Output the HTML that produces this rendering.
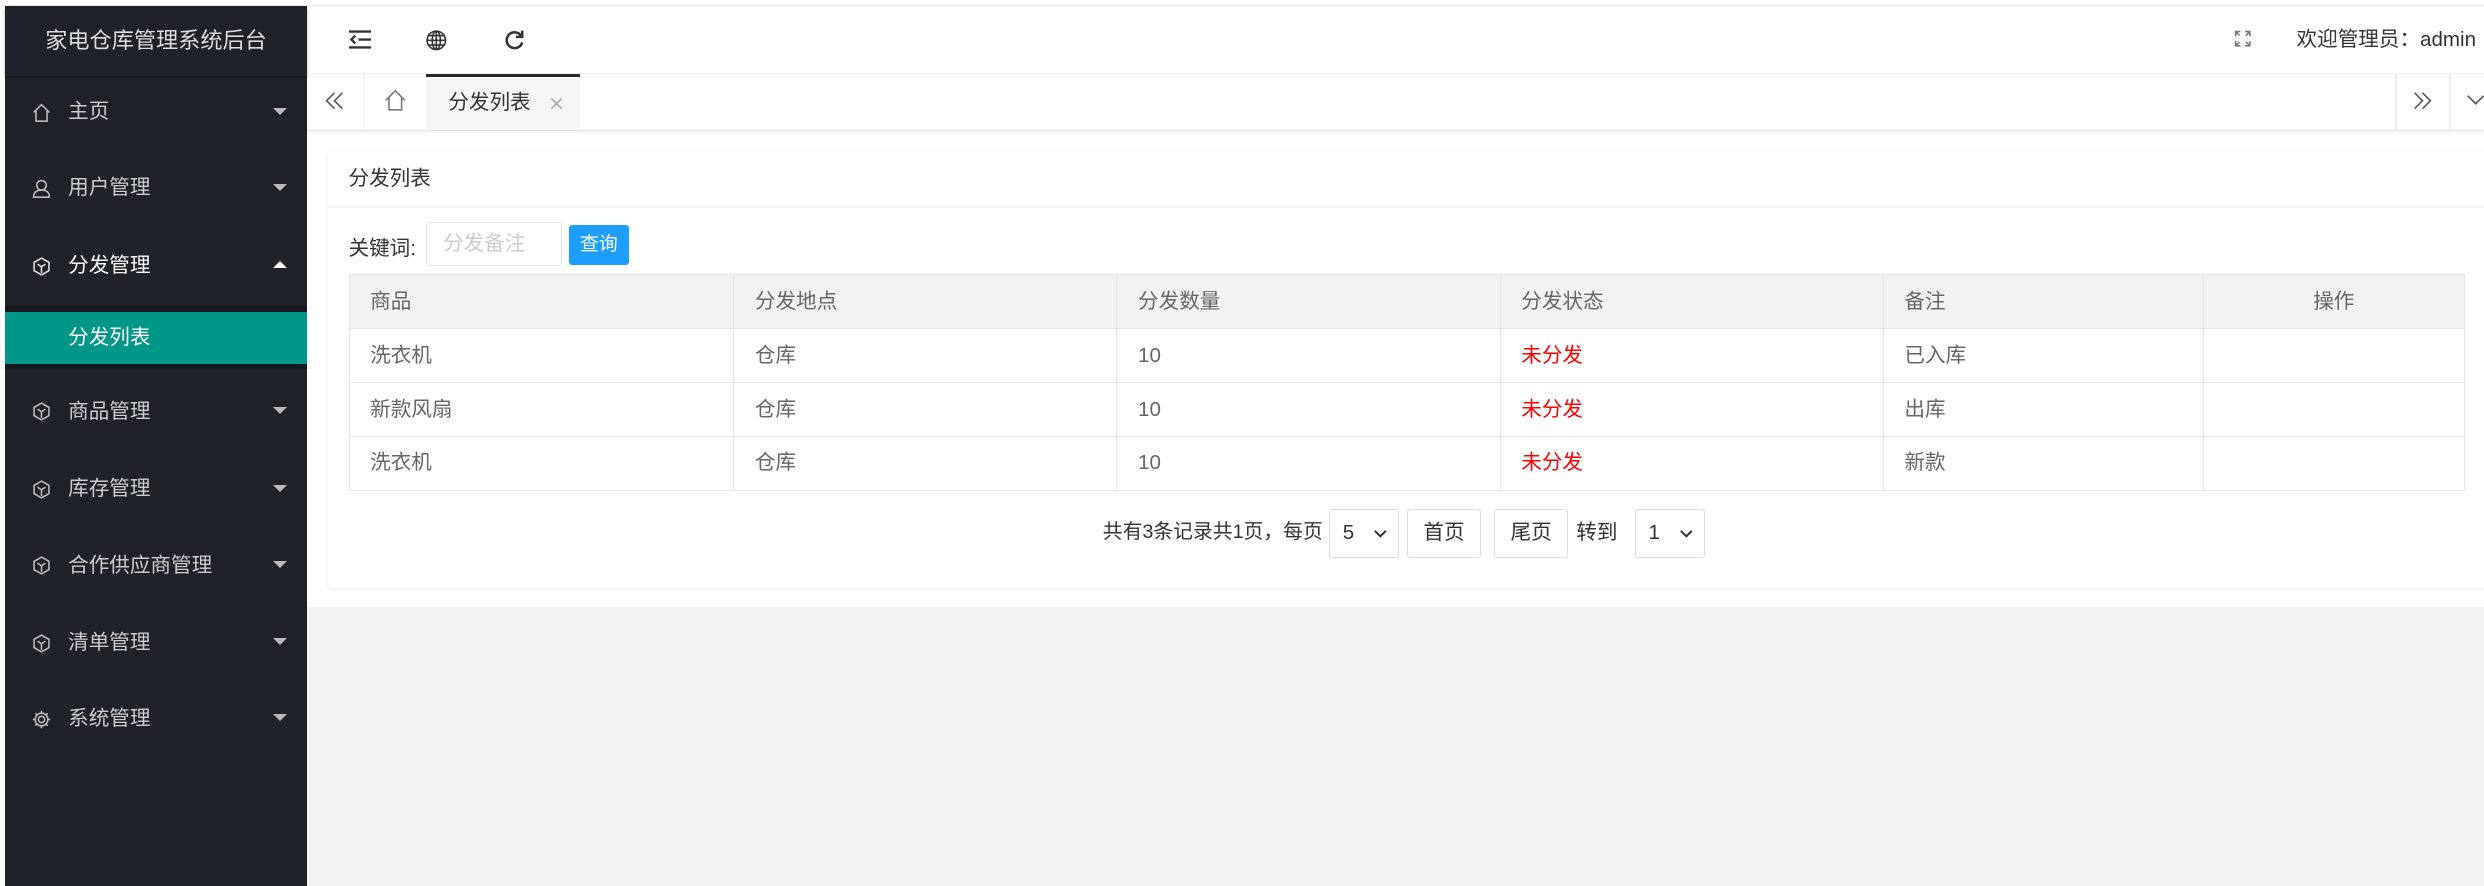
<!DOCTYPE html>
<html><head><meta charset="utf-8"><style>
*{margin:0;padding:0;box-sizing:border-box}
html,body{width:2484px;height:886px;overflow:hidden;background:#fff}
#w{zoom:1.58418;width:1568px;height:559px;position:relative;font-family:"Liberation Sans","Noto Sans CJK SC",sans-serif;font-size:13px;color:#333;line-height:16px}
.a{position:absolute;white-space:nowrap}
#side{left:3px;top:4px;width:191px;height:555px;background:#20222a;color:#ccc}
.mi{position:absolute;left:0;width:191px;height:48px;line-height:48px;padding-left:40px;font-size:13px;color:#ccc}
.mi svg.ic{position:absolute;left:17px;top:18px}
.mi .tri{position:absolute;right:13px;top:21px;width:0;height:0;border-left:5px solid transparent;border-right:5px solid transparent;border-top:5px solid #bbb}
.mi .up{border-top:none;border-bottom:5px solid #fff}
table{border-collapse:collapse;position:absolute;left:220px;top:173px;width:1336px;color:#666}
td,th{border:1px solid #e6e6e6;height:34px;padding:0 0 0 13px;text-align:left;font-weight:normal;vertical-align:middle;line-height:16px}
th{background:#f2f2f2}
.r{color:#f00}
.btn{position:absolute;border:1px solid #ddd;border-radius:2px;height:31px;line-height:29px;text-align:center;background:#fff}
</style></head><body><div id="w">
<div class="a" style="left:0;top:0;width:1568px;height:4px;background:#fff;border-bottom:1px solid #eee"></div>
<div id="side" class="a">
 <div class="a" style="left:0;top:0;width:191px;height:44px;line-height:44px;text-align:center;font-size:14px;color:#ddd;box-shadow:0 1px 2px rgba(0,0,0,.3)">家电仓库管理系统后台</div>
 <div class="mi" style="top:43px"><svg class="ic" width="12" height="12" viewBox="0 0 12 12" fill="none" stroke="#bbb"><path d="M1 6L6 1 11 6M2.5 5v6.5h7V5"/></svg>主页<i class="tri"></i></div>
 <div class="mi" style="top:91px"><svg class="ic" width="12" height="12" viewBox="0 0 12 12" fill="none" stroke="#bbb"><circle cx="6" cy="4" r="3"/><path d="M1 11.5c0-3 2-4.5 5-4.5s5 1.5 5 4.5z"/></svg>用户管理<i class="tri"></i></div>
 <div class="mi" style="top:140px;color:#fff"><svg class="ic" width="12" height="12" viewBox="0 0 12 12" fill="none" stroke="#ddd"><path d="M6 .7l4.7 2.7v5.2L6 11.3 1.3 8.6V3.4zM3.5 4.5L6 6.2l2.5-1.7M6 6.2v4"/></svg>分发管理<i class="tri up"></i></div>
 <div class="a" style="left:0;top:189px;width:191px;height:40px;background:#17181d"></div>
 <div class="a" style="left:0;top:193px;width:191px;height:33px;line-height:33px;background:#009688;color:#fff;padding-left:40px">分发列表</div>
 <div class="mi" style="top:232px"><svg class="ic" width="12" height="12" viewBox="0 0 12 12" fill="none" stroke="#bbb"><path d="M6 .7l4.7 2.7v5.2L6 11.3 1.3 8.6V3.4zM3.5 4.5L6 6.2l2.5-1.7M6 6.2v4"/></svg>商品管理<i class="tri"></i></div>
 <div class="mi" style="top:281px"><svg class="ic" width="12" height="12" viewBox="0 0 12 12" fill="none" stroke="#bbb"><path d="M6 .7l4.7 2.7v5.2L6 11.3 1.3 8.6V3.4zM3.5 4.5L6 6.2l2.5-1.7M6 6.2v4"/></svg>库存管理<i class="tri"></i></div>
 <div class="mi" style="top:329px"><svg class="ic" width="12" height="12" viewBox="0 0 12 12" fill="none" stroke="#bbb"><path d="M6 .7l4.7 2.7v5.2L6 11.3 1.3 8.6V3.4zM3.5 4.5L6 6.2l2.5-1.7M6 6.2v4"/></svg>合作供应商管理<i class="tri"></i></div>
 <div class="mi" style="top:378px"><svg class="ic" width="12" height="12" viewBox="0 0 12 12" fill="none" stroke="#bbb"><path d="M6 .7l4.7 2.7v5.2L6 11.3 1.3 8.6V3.4zM3.5 4.5L6 6.2l2.5-1.7M6 6.2v4"/></svg>清单管理<i class="tri"></i></div>
 <div class="mi" style="top:426px"><svg class="ic" width="12" height="12" viewBox="0 0 12 12" fill="none" stroke="#bbb"><circle cx="6" cy="6" r="2"/><path d="M6 .5v2M6 9.5v2M.5 6h2M9.5 6h2M2.1 2.1l1.4 1.4M8.5 8.5l1.4 1.4M2.1 9.9l1.4-1.4M8.5 3.5l1.4-1.4"/><circle cx="6" cy="6" r="4"/></svg>系统管理<i class="tri"></i></div>
</div>
<!-- header -->
<svg class="a" style="left:220px;top:19px" width="14" height="12" viewBox="0 0 14 12" fill="none" stroke="#333" stroke-width="1.5"><path d="M0 1h14M6 6h8M0 11h14M4 3.5L1.5 6 4 8.5"/></svg>
<svg class="a" style="left:269px;top:19px" width="13" height="13" viewBox="0 0 13 13" fill="none" stroke="#333"><circle cx="6.5" cy="6.5" r="5.8"/><ellipse cx="6.5" cy="6.5" rx="2.6" ry="5.8"/><path d="M.7 6.5h11.6M1.5 3.5h10M1.5 9.5h10M6.5.7v11.6"/></svg>
<svg class="a" style="left:318px;top:18px" width="13" height="14" viewBox="0 0 13 14" fill="none" stroke="#333" stroke-width="1.6"><path d="M11 4.5A5 5 0 1 0 11.5 8.5"/><path d="M11.5 1v4h-4" /></svg>
<svg class="a" style="left:1410px;top:19px" width="11" height="11" viewBox="0 0 11 11" fill="none" stroke="#777"><path d="M1 4V1h3M1 1l2.5 2.5M10 4V1H7M10 1L7.5 3.5M1 7v3h3M1 10l2.5-2.5M10 7v3H7M10 10L7.5 7.5"/></svg>
<div class="a" style="right:5px;top:17px;font-size:13px;color:#333">欢迎管理员：admin</div>
<!-- tabs -->
<div class="a" style="left:194px;top:46px;width:1374px;height:37px;border-top:1px solid #f0f0f0;border-bottom:1px solid #e6e6e6;box-shadow:0 1px 2px rgba(0,0,0,.06)"></div>
<div class="a" style="left:229px;top:47px;width:1px;height:35px;background:#eee"></div>
<div class="a" style="left:1512px;top:47px;width:1px;height:35px;background:#eee"></div>
<div class="a" style="left:1546px;top:47px;width:1px;height:35px;background:#eee"></div>
<svg class="a" style="left:205px;top:58px" width="12" height="11" viewBox="0 0 12 11" fill="none" stroke="#555"><path d="M6 .5l-5 5 5 5M11 .5l-5 5 5 5"/></svg>
<svg class="a" style="left:1523px;top:58px" width="12" height="11" viewBox="0 0 12 11" fill="none" stroke="#555"><path d="M1 .5l5 5-5 5M6 .5l5 5-5 5"/></svg>
<svg class="a" style="left:1557px;top:60px" width="11" height="7" viewBox="0 0 11 7" fill="none" stroke="#555"><path d="M.5.5l5 5 5-5"/></svg>
<svg class="a" style="left:243px;top:57px" width="13" height="13" viewBox="0 0 13 13" fill="none" stroke="#777"><path d="M.5 6.5L6.5.5l6 6M2.5 5v7.5h8V5"/></svg>
<div class="a" style="left:269px;top:47px;width:97px;height:35px;background:#f6f6f6;border-top:2px solid #292b34"></div>
<div class="a" style="left:283px;top:57px;color:#333">分发列表</div>
<svg class="a" style="left:348px;top:62px" width="7" height="7" viewBox="0 0 7 7" stroke="#aaa"><path d="M0 0l7 7M7 0L0 7"/></svg>
<!-- content -->
<div class="a" style="left:194px;top:383px;width:1374px;height:176px;background:#f2f2f2"></div>
<div class="a" style="left:207px;top:96px;width:1361px;height:275px;background:#fff;box-shadow:0 1px 3px rgba(0,0,0,.08)"></div>
<div class="a" style="left:207px;top:130px;width:1361px;height:1px;background:#f4f4f4"></div>
<div class="a" style="left:220px;top:105px;color:#333">分发列表</div>
<div class="a" style="left:220px;top:149px;color:#333">关键词:</div>
<div class="a" style="left:269px;top:140px;width:86px;height:28px;border:1px solid #e6e6e6;border-radius:2px;padding-left:10px;line-height:26px;color:#ccc">分发备注</div>
<div class="a" style="left:359px;top:142px;width:38px;height:25px;background:#1e9fff;color:#fff;line-height:25px;text-align:center;border-radius:2px;font-size:12px">查询</div>
<table>
<colgroup><col style="width:243px"><col style="width:242px"><col style="width:242px"><col style="width:242px"><col style="width:202px"><col style="width:165px"></colgroup>
<tr><th>商品</th><th>分发地点</th><th>分发数量</th><th>分发状态</th><th>备注</th><th style="text-align:center;padding:0">操作</th></tr>
<tr><td>洗衣机</td><td>仓库</td><td>10</td><td class="r">未分发</td><td>已入库</td><td></td></tr>
<tr><td>新款风扇</td><td>仓库</td><td>10</td><td class="r">未分发</td><td>出库</td><td></td></tr>
<tr><td>洗衣机</td><td>仓库</td><td>10</td><td class="r">未分发</td><td>新款</td><td></td></tr>
</table>
<div class="a" style="right:733px;top:328px;color:#333;font-size:12.5px">共有3条记录共1页，每页</div>
<div class="btn" style="left:839px;top:321px;width:44px;text-align:left;padding-left:8px">5<svg style="position:absolute;right:7px;top:13px" width="8" height="5" viewBox="0 0 8 5" fill="none" stroke="#333" stroke-width="1.3"><path d="M.5.5L4 4 7.5.5"/></svg></div>
<div class="btn" style="left:888px;top:321px;width:47px">首页</div>
<div class="btn" style="left:943px;top:321px;width:47px">尾页</div>
<div class="a" style="left:995px;top:328px;color:#333">转到</div>
<div class="btn" style="left:1032px;top:321px;width:44px;text-align:left;padding-left:8px">1<svg style="position:absolute;right:7px;top:13px" width="8" height="5" viewBox="0 0 8 5" fill="none" stroke="#333" stroke-width="1.3"><path d="M.5.5L4 4 7.5.5"/></svg></div>
</div></body></html>
